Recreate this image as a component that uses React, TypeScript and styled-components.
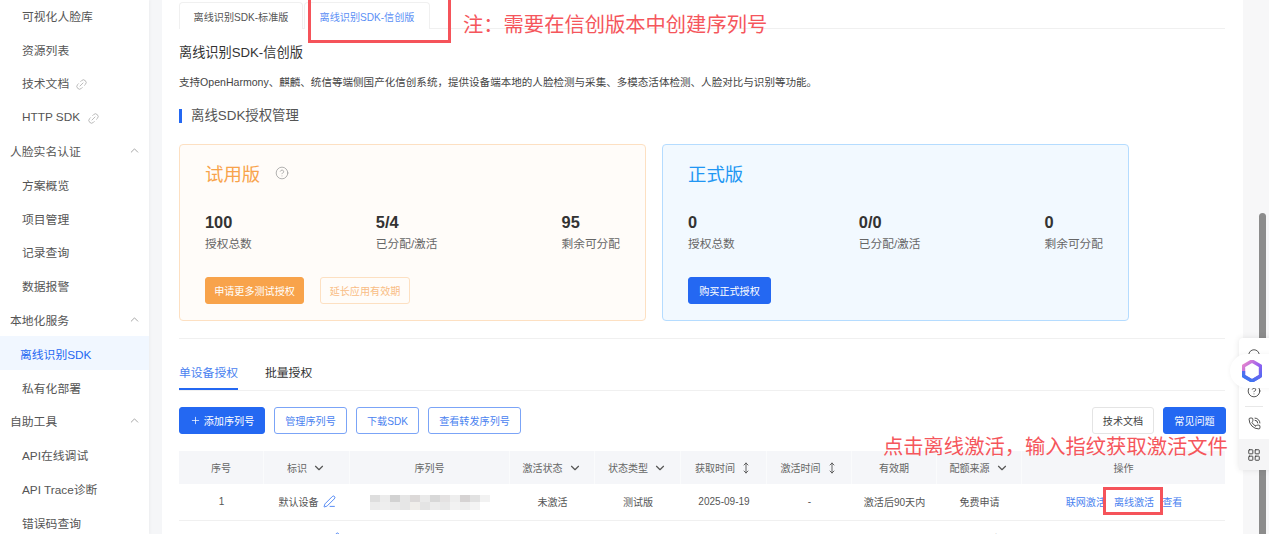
import React from "react";
import styled, { createGlobalStyle } from "styled-components";
import {
  ChevronDown,
  ChevronUp,
  CircleHelp,
  Headphones,
  LayoutGrid,
  Link2,
  MoveVertical,
  PenLine,
  PhoneCall,
  Plus,
} from "lucide-react";

const Global = createGlobalStyle`
  html, body { margin: 0; padding: 0; overflow: hidden; }
  body { font-family: "Liberation Sans", "Noto Sans CJK SC", sans-serif; color: #333; background: #fff; }
`;

/* Page shell */
const Page = styled.div`
  position: relative;
  display: flex;
  width: 1269px;
  height: 534px;
  overflow: hidden;
  background: #f5f6f8;
`;

/* Sidebar */
const Side = styled.nav`
  flex: 0 0 149px;
  height: 534px;
  overflow: hidden;
  background: #fff;
  box-shadow: 1px 0 3px rgba(0, 0, 0, 0.04);
`;
const SideList = styled.div`
  margin-top: -1.5px;
`;
const SideRow = styled.div<{ $group?: boolean; $active?: boolean }>`
  display: flex;
  align-items: center;
  height: 33.8px;
  padding-left: ${(p) => (p.$group ? 10 : p.$active ? 20 : 22)}px;
  padding-right: 8px;
  font-size: 11.8px;
  color: ${(p) => (p.$active ? "#2468f2" : "#555")};
  background: ${(p) => (p.$active ? "#f1f7ff" : "transparent")};
`;
const SideArrow = styled.span`
  display: flex;
  margin-left: auto;
  color: #999;
`;
const SideLink = styled.span<{ $gap: number }>`
  display: flex;
  margin-left: ${(p) => p.$gap}px;
  margin-top: 3px;
  color: #aaa;
  transform: rotate(-45deg);
`;

/* Main column */
const Main = styled.main`
  flex: 0 0 1081px;
  height: 534px;
  margin-left: 13px;
  padding: 2px 18px 0 17px;
  box-sizing: border-box;
  overflow: hidden;
  background: #fff;
`;
const TopTabs = styled.div`
  display: flex;
  gap: 1px;
  height: 27px;
  box-sizing: border-box;
  border-bottom: 1px solid #f0f0f0;
`;
const TopTab = styled.div<{ $active?: boolean }>`
  display: flex;
  align-items: center;
  justify-content: center;
  width: ${(p) => (p.$active ? 126 : 124)}px;
  height: 27px;
  box-sizing: border-box;
  border: 1px solid #f0f0f0;
  border-bottom: none;
  border-radius: 4px 4px 0 0;
  font-size: 10.1px;
  color: ${(p) => (p.$active ? "#5b8ff5" : "#555")};
  background: #fff;
`;
const Title = styled.h2`
  margin: 15px 0 0;
  font-size: 13.2px;
  line-height: 18px;
  font-weight: 400;
  color: #333;
`;
const Desc = styled.p`
  margin: 12px 0 0;
  font-size: 10.55px;
  line-height: 16px;
  color: #444;
`;
const Section = styled.h3`
  display: flex;
  align-items: center;
  gap: 9px;
  margin: 17px 0 0;
  font-size: 13.4px;
  line-height: 18px;
  font-weight: 400;
  color: #555;
`;
const SectionBar = styled.i`
  display: block;
  width: 3px;
  height: 14px;
  background: #2468f2;
`;

/* Licence cards */
const Cards = styled.div`
  display: flex;
  gap: 16px;
  margin-top: 19px;
`;
const Card = styled.section<{ $pro?: boolean }>`
  width: 467px;
  height: 177px;
  box-sizing: border-box;
  padding: 15px 25px 0;
  border: 1px solid ${(p) => (p.$pro ? "#b5dcff" : "#fde0c2")};
  border-radius: 4px;
  background: ${(p) => (p.$pro ? "#f2f9ff" : "#fffcf9")};
`;
const CardHead = styled.div<{ $pro?: boolean }>`
  display: flex;
  align-items: center;
  gap: 15px;
  height: 26px;
  font-size: 18.4px;
  color: ${(p) => (p.$pro ? "#2196f3" : "#f8a34b")};
`;
const HelpIcon = styled.span`
  display: flex;
  color: #999;
`;
const Stats = styled.div`
  display: flex;
  justify-content: space-between;
  margin-top: 26px;
`;
const Stat = styled.div`
  display: flex;
  flex-direction: column;
`;
const StatNum = styled.b`
  font-size: 16.4px;
  line-height: 20px;
  color: #333;
`;
const StatLabel = styled.span`
  margin-top: 3px;
  font-size: 11.7px;
  line-height: 17px;
  color: #666;
`;
const CardActions = styled.div`
  display: flex;
  gap: 16px;
  margin-top: 25px;
`;

type BtnKind = "primary" | "outline" | "plain" | "orange" | "ghost";
const btnBorder: Record<BtnKind, string> = {
  primary: "#2468f2",
  outline: "#7ba4f7",
  plain: "#e4e4e4",
  orange: "#f8a34b",
  ghost: "#fde0c2",
};
const btnText: Record<BtnKind, string> = {
  primary: "#fff",
  outline: "#4a82f0",
  plain: "#444",
  orange: "#fff",
  ghost: "#f9bc85",
};
const btnFill: Record<BtnKind, string> = {
  primary: "#2468f2",
  outline: "#fff",
  plain: "#fff",
  orange: "#f8a34b",
  ghost: "transparent",
};
const Btn = styled.button<{ $kind: BtnKind; $w: number }>`
  display: inline-flex;
  align-items: center;
  justify-content: center;
  gap: 3px;
  width: ${(p) => p.$w}px;
  height: 27px;
  padding: 0;
  box-sizing: border-box;
  border-radius: 3px;
  font-family: inherit;
  font-size: 10.1px;
  border: 1px solid ${(p) => btnBorder[p.$kind]};
  color: ${(p) => btnText[p.$kind]};
  background: ${(p) => btnFill[p.$kind]};
`;

const Divider = styled.hr`
  margin: 17px 0 0;
  border: none;
  border-top: 1px solid #f0f0f0;
`;

/* Sub tabs */
const SubTabs = styled.div`
  display: flex;
  gap: 27px;
  height: 52px;
  box-sizing: border-box;
  border-bottom: 1px solid #f0f0f0;
`;
const SubTab = styled.div<{ $active?: boolean }>`
  display: flex;
  align-items: center;
  height: 51px;
  padding-top: 15px;
  box-sizing: border-box;
  font-size: 11.8px;
  color: ${(p) => (p.$active ? "#4a82f0" : "#333")};
  border-bottom: 2px solid ${(p) => (p.$active ? "#2468f2" : "transparent")};
`;

/* Toolbar */
const Toolbar = styled.div`
  display: flex;
  align-items: center;
  gap: 9px;
  margin-top: 16px;
`;
const ToolbarEnd = styled.div`
  display: flex;
  gap: 9px;
  margin-left: auto;
  margin-right: -1px;
`;

/* Table */
const COLUMNS = "85px 86px 160px 85px 86px 86px 85px 85px 85px 203px";
const HeadRow = styled.div`
  display: grid;
  grid-template-columns: ${COLUMNS};
  height: 33px;
  margin-top: 17px;
  background: #f5f6f9;
`;
const HeadCell = styled.div`
  display: flex;
  align-items: center;
  justify-content: center;
  gap: 5px;
  font-size: 10.05px;
  color: #666;
  border-right: 1px solid #fafbfc;
  &:last-child { border-right: none; }
`;
const HeadIcon = styled.span`
  display: flex;
  color: #555;
`;
const BodyRow = styled.div`
  display: grid;
  grid-template-columns: ${COLUMNS};
  height: 36px;
  border-bottom: 1px solid #f0f0f0;
`;
const Cell = styled.div`
  display: flex;
  align-items: center;
  justify-content: center;
  gap: 4px;
  padding-bottom: 2px;
  box-sizing: border-box;
  font-size: 10.05px;
  color: #555;
`;
const EditIcon = styled.span<{ $shift?: number }>`
  display: flex;
  margin-left: ${(p) => p.$shift ?? 0}px;
  color: #2f6ff0;
`;
const Mosaic = styled.div`
  display: grid;
  grid-template-columns: repeat(12, 10px);
  grid-auto-rows: 7.5px;
  width: 120px;
  margin-top: 2px;
  filter: blur(0.7px);
`;
const MosaicCell = styled.span<{ $c: string }>`
  background: ${(p) => p.$c};
`;
const ActionLinks = styled.div`
  display: flex;
  gap: 8px;
  margin-left: 1px;
`;
const ActionLink = styled.a`
  font-size: 10.05px;
  color: #4a82f0;
`;

/* Scroll rail */
const Rail = styled.div`
  flex: 1;
  height: 534px;
  padding: 213px 3px 0 16px;
  box-sizing: border-box;
  background: #f7f7f8;
`;
const Thumb = styled.div`
  width: 7px;
  height: 340px;
  border-radius: 4px;
  background: #8c8c8c;
`;

/* Floating helpers, over the page */
const Float = styled.aside`
  position: absolute;
  top: 338px;
  left: 1239px;
  width: 40px;
  height: 132px;
  display: flex;
  flex-direction: column;
  align-items: flex-start;
  border-radius: 4px;
  background: #fff;
  box-shadow: 0 0 6px rgba(0, 0, 0, 0.1);
`;
const FloatIcon = styled.div<{ $grey?: boolean; $h: number; $top?: number }>`
  display: flex;
  align-items: center;
  justify-content: center;
  width: 100%;
  height: ${(p) => p.$h}px;
  padding: ${(p) => p.$top ?? 0}px 10px 0 0;
  box-sizing: border-box;
  color: #333;
  background: ${(p) => (p.$grey ? "#f5f5f6" : "transparent")};
`;
const FloatRule = styled.div`
  width: 18px;
  margin-left: 6px;
  border-top: 1px solid #e8e8e8;
`;
const LogoPill = styled.div`
  position: absolute;
  top: 354px;
  left: 1230px;
  width: 50px;
  height: 34px;
  display: flex;
  align-items: center;
  padding-left: 12px;
  box-sizing: border-box;
  border-radius: 17px 0 0 17px;
  background: #fff;
  box-shadow: 0 0 5px rgba(0, 0, 0, 0.05);
`;

/* Red notes drawn on the screenshot */
const NoteBox = styled.div<{ $x: number; $y: number; $w: number; $h: number }>`
  position: absolute;
  left: ${(p) => p.$x}px;
  top: ${(p) => p.$y}px;
  width: ${(p) => p.$w}px;
  height: ${(p) => p.$h}px;
  box-sizing: border-box;
  border: 3px solid #f5535a;
`;
const NoteText = styled.div<{ $x: number; $y: number }>`
  position: absolute;
  left: ${(p) => p.$x}px;
  top: ${(p) => p.$y}px;
  font-size: 20.3px;
  line-height: 26px;
  white-space: nowrap;
  color: #f5565c;
`;

const sideItems: { label: string; group?: boolean; active?: boolean; link?: number }[] = [
  { label: "可视化人脸库" },
  { label: "资源列表" },
  { label: "技术文档", link: 6 },
  { label: "HTTP SDK", link: 7 },
  { label: "人脸实名认证", group: true },
  { label: "方案概览" },
  { label: "项目管理" },
  { label: "记录查询" },
  { label: "数据报警" },
  { label: "本地化服务", group: true },
  { label: "离线识别SDK", active: true },
  { label: "私有化部署" },
  { label: "自助工具", group: true },
  { label: "API在线调试" },
  { label: "API Trace诊断" },
  { label: "错误码查询" },
];

const mosaicColors = [
  "#dedede", "#ececec", "#d2d2d2", "#e6e6e6", "#dcd9d8", "#eaeaea", "#d8d8d8", "#e4e2e2", "#eeeeee", "#d6d3d3", "#e2e2e2", "#f2f2f2",
  "#ececec", "#eeeeee", "#eaeaea", "#e6e6e6", "#f0eeea", "#e4e4e4", "#ececec", "#e8e8e8", "#f2f2f2", "#eeeeee", "#f4f4f4", "#ffffff",
];

const head: { label: string; icon?: "filter" | "sort" }[] = [
  { label: "序号" },
  { label: "标识", icon: "filter" },
  { label: "序列号" },
  { label: "激活状态", icon: "filter" },
  { label: "状态类型", icon: "filter" },
  { label: "获取时间", icon: "sort" },
  { label: "激活时间", icon: "sort" },
  { label: "有效期" },
  { label: "配额来源", icon: "filter" },
  { label: "操作" },
];

// full-width punctuation, written as escapes
const DESC_TEXT =
  "支持OpenHarmony、麒麟、统信等端侧国产化信创系统\uFF0C提供设备端本地的人脸检测与采集、多模态活体检测、人脸对比与识别等功能。";
const NOTE_TOP = "注\uFF1A需要在信创版本中创建序列号";
const NOTE_BOTTOM = "点击离线激活\uFF0C输入指纹获取激活文件";

const LogoMark = () => (
  <svg width="20" height="22" viewBox="0 0 20 22" fill="none">
    <defs>
      <linearGradient id="logoA" x1="0" y1="0" x2="1" y2="1">
        <stop offset="0" stopColor="#f08ac8" />
        <stop offset="0.55" stopColor="#9a5ff0" />
        <stop offset="1" stopColor="#3f6cf2" />
      </linearGradient>
      <linearGradient id="logoB" x1="0" y1="1" x2="1" y2="0">
        <stop offset="0" stopColor="#2f7bf0" />
        <stop offset="1" stopColor="#7d5cf0" />
      </linearGradient>
    </defs>
    <path d="M10 1 L18.5 6 V16 L10 21 L1.5 16 V6 Z" stroke="url(#logoA)" strokeWidth="3.4" strokeLinejoin="round" />
    <path d="M1.5 11 V16 L10 21 L18.5 16" stroke="url(#logoB)" strokeWidth="3.4" strokeLinejoin="round" />
  </svg>
);

const Stats3 = ({ data }: { data: [string, string][] }) => (
  <Stats>
    {data.map(([num, label]) => (
      <Stat key={label}>
        <StatNum>{num}</StatNum>
        <StatLabel>{label}</StatLabel>
      </Stat>
    ))}
  </Stats>
);

const App = () => {
  return (
    <Page>
      <Global />
      <Side>
        <SideList>
          {sideItems.map((item) => (
            <SideRow key={item.label} $group={item.group} $active={item.active}>
              {item.label}
              {item.link && (
                <SideLink $gap={item.link}>
                  <Link2 size={13} strokeWidth={1.4} />
                </SideLink>
              )}
              {item.group && (
                <SideArrow>
                  <ChevronUp size={13} strokeWidth={1.6} />
                </SideArrow>
              )}
            </SideRow>
          ))}
        </SideList>
      </Side>

      <Main>
        <TopTabs>
          <TopTab>离线识别SDK-标准版</TopTab>
          <TopTab $active>离线识别SDK-信创版</TopTab>
        </TopTabs>
        <Title>离线识别SDK-信创版</Title>
        <Desc>{DESC_TEXT}</Desc>
        <Section>
          <SectionBar />
          离线SDK授权管理
        </Section>

        <Cards>
          <Card>
            <CardHead>
              试用版
              <HelpIcon>
                <CircleHelp size={14} strokeWidth={1.3} />
              </HelpIcon>
            </CardHead>
            <Stats3
              data={[
                ["100", "授权总数"],
                ["5/4", "已分配/激活"],
                ["95", "剩余可分配"],
              ]}
            />
            <CardActions>
              <Btn $kind="orange" $w={99}>申请更多测试授权</Btn>
              <Btn $kind="ghost" $w={90}>延长应用有效期</Btn>
            </CardActions>
          </Card>
          <Card $pro>
            <CardHead $pro>正式版</CardHead>
            <Stats3
              data={[
                ["0", "授权总数"],
                ["0/0", "已分配/激活"],
                ["0", "剩余可分配"],
              ]}
            />
            <CardActions>
              <Btn $kind="primary" $w={83}>购买正式授权</Btn>
            </CardActions>
          </Card>
        </Cards>

        <Divider />

        <SubTabs>
          <SubTab $active>单设备授权</SubTab>
          <SubTab>批量授权</SubTab>
        </SubTabs>

        <Toolbar>
          <Btn $kind="primary" $w={86}>
            <Plus size={11} strokeWidth={1.6} />
            添加序列号
          </Btn>
          <Btn $kind="outline" $w={73}>管理序列号</Btn>
          <Btn $kind="outline" $w={63}>下载SDK</Btn>
          <Btn $kind="outline" $w={93}>查看转发序列号</Btn>
          <ToolbarEnd>
            <Btn $kind="plain" $w={62}>技术文档</Btn>
            <Btn $kind="primary" $w={63}>常见问题</Btn>
          </ToolbarEnd>
        </Toolbar>

        <HeadRow>
          {head.map((h) => (
            <HeadCell key={h.label}>
              {h.label}
              {h.icon === "filter" && (
                <HeadIcon>
                  <ChevronDown size={14} strokeWidth={2} />
                </HeadIcon>
              )}
              {h.icon === "sort" && (
                <HeadIcon>
                  <MoveVertical size={12} strokeWidth={1.8} />
                </HeadIcon>
              )}
            </HeadCell>
          ))}
        </HeadRow>
        <BodyRow>
          <Cell>1</Cell>
          <Cell>
            默认设备
            <EditIcon>
              <PenLine size={13} strokeWidth={1.5} />
            </EditIcon>
          </Cell>
          <Cell>
            <Mosaic>
              {mosaicColors.map((c, i) => (
                <MosaicCell key={i} $c={c} />
              ))}
            </Mosaic>
          </Cell>
          <Cell>未激活</Cell>
          <Cell>测试版</Cell>
          <Cell>2025-09-19</Cell>
          <Cell>-</Cell>
          <Cell>激活后90天内</Cell>
          <Cell>免费申请</Cell>
          <Cell>
            <ActionLinks>
              <ActionLink>联网激活</ActionLink>
              <ActionLink>离线激活</ActionLink>
              <ActionLink>查看</ActionLink>
            </ActionLinks>
          </Cell>
        </BodyRow>
        <BodyRow>
          <Cell />
          <Cell>
            <EditIcon $shift={52}>
              <PenLine size={13} strokeWidth={1.5} />
            </EditIcon>
          </Cell>
          <Cell />
          <Cell>已激活</Cell>
          <Cell>测试版</Cell>
          <Cell />
          <Cell />
          <Cell>激活后90天内</Cell>
          <Cell>免费申请</Cell>
          <Cell>
            <ActionLinks>
              <ActionLink>下载授权文件</ActionLink>
              <ActionLink>查看</ActionLink>
            </ActionLinks>
          </Cell>
        </BodyRow>
      </Main>

      <Rail>
        <Thumb />
      </Rail>

      <Float>
        <FloatIcon $h={34}>
          <Headphones size={14} strokeWidth={1.4} />
        </FloatIcon>
        <FloatIcon $h={34} $top={4}>
          <CircleHelp size={14} strokeWidth={1.4} />
        </FloatIcon>
        <FloatRule />
        <FloatIcon $h={32}>
          <PhoneCall size={13} strokeWidth={1.6} />
        </FloatIcon>
        <FloatIcon $h={31} $grey>
          <LayoutGrid size={14} strokeWidth={1.5} />
        </FloatIcon>
      </Float>
      <LogoPill>
        <LogoMark />
      </LogoPill>

      <NoteBox $x={308} $y={-4} $w={143} $h={47} />
      <NoteText $x={463} $y={12}>{NOTE_TOP}</NoteText>
      <NoteBox $x={1103} $y={487} $w={60} $h={28} />
      <NoteText $x={883} $y={434}>{NOTE_BOTTOM}</NoteText>
    </Page>
  );
};

export default App;
